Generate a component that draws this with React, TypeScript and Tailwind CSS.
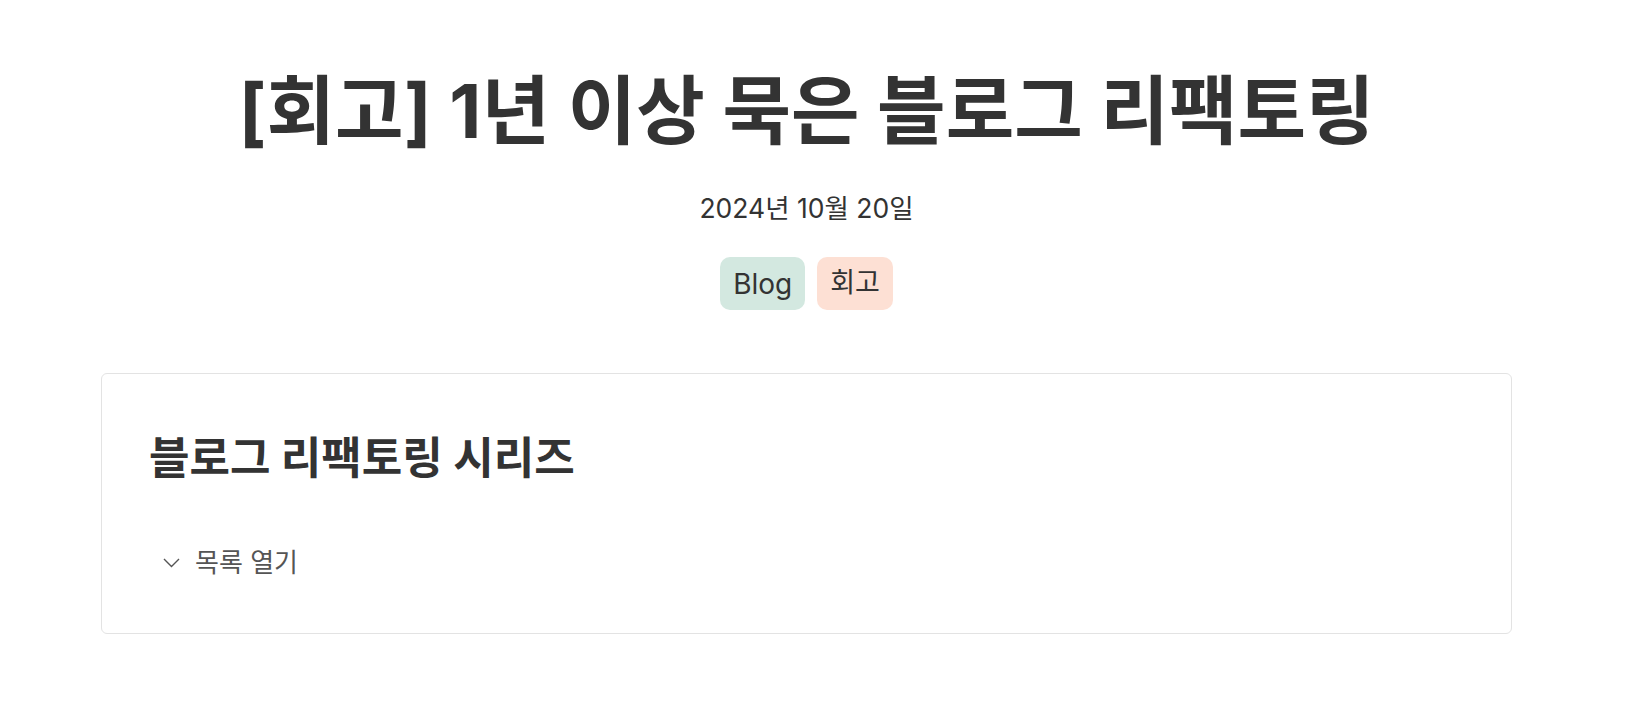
export default function App() {
  return (
    <div
      className="min-h-screen bg-white text-[#333333]"
      style={{ fontFamily: 'Inter, "Noto Sans CJK KR", sans-serif' }}
    >
      <div className="ml-[101px] w-[1411px] flex flex-col items-center">
        <h1 className="pt-[70px] text-[74.5px] leading-[82px] font-bold">
          [회고] 1년 이상 묵은 블로그 리팩토링
        </h1>
        <p className="mt-[42px] text-[26.5px] leading-[28px] text-[#333]">
          2024년 10월 20일
        </p>
        <div className="mt-[35px] flex gap-[12px]">
          <span className="h-[53px] px-[13px] flex items-center rounded-[10px] bg-[#d3e8e0] text-[28px]">
            Blog
          </span>
          <span className="h-[53px] px-[13px] flex items-center rounded-[10px] bg-[#fde0d4] text-[27px]">
            회고
          </span>
        </div>
        <section className="mt-[63px] w-full border border-[#e3e3e3] rounded-[6px] pl-[47px] pt-[55px] pb-[54px]">
          <h2 className="text-[44px] leading-[58px] font-bold">
            블로그 리팩토링 시리즈
          </h2>
          <button className="mt-[60px] ml-[14px] flex items-center gap-[15px] text-[26px] leading-[32px] text-[#555]">
            <svg width="17" height="10" viewBox="0 0 17 10" fill="none" stroke="currentColor" strokeWidth="1.4">
              <polyline points="1,1 8.5,8.5 16,1" />
            </svg>
            목록 열기
          </button>
        </section>
      </div>
    </div>
  );
}
